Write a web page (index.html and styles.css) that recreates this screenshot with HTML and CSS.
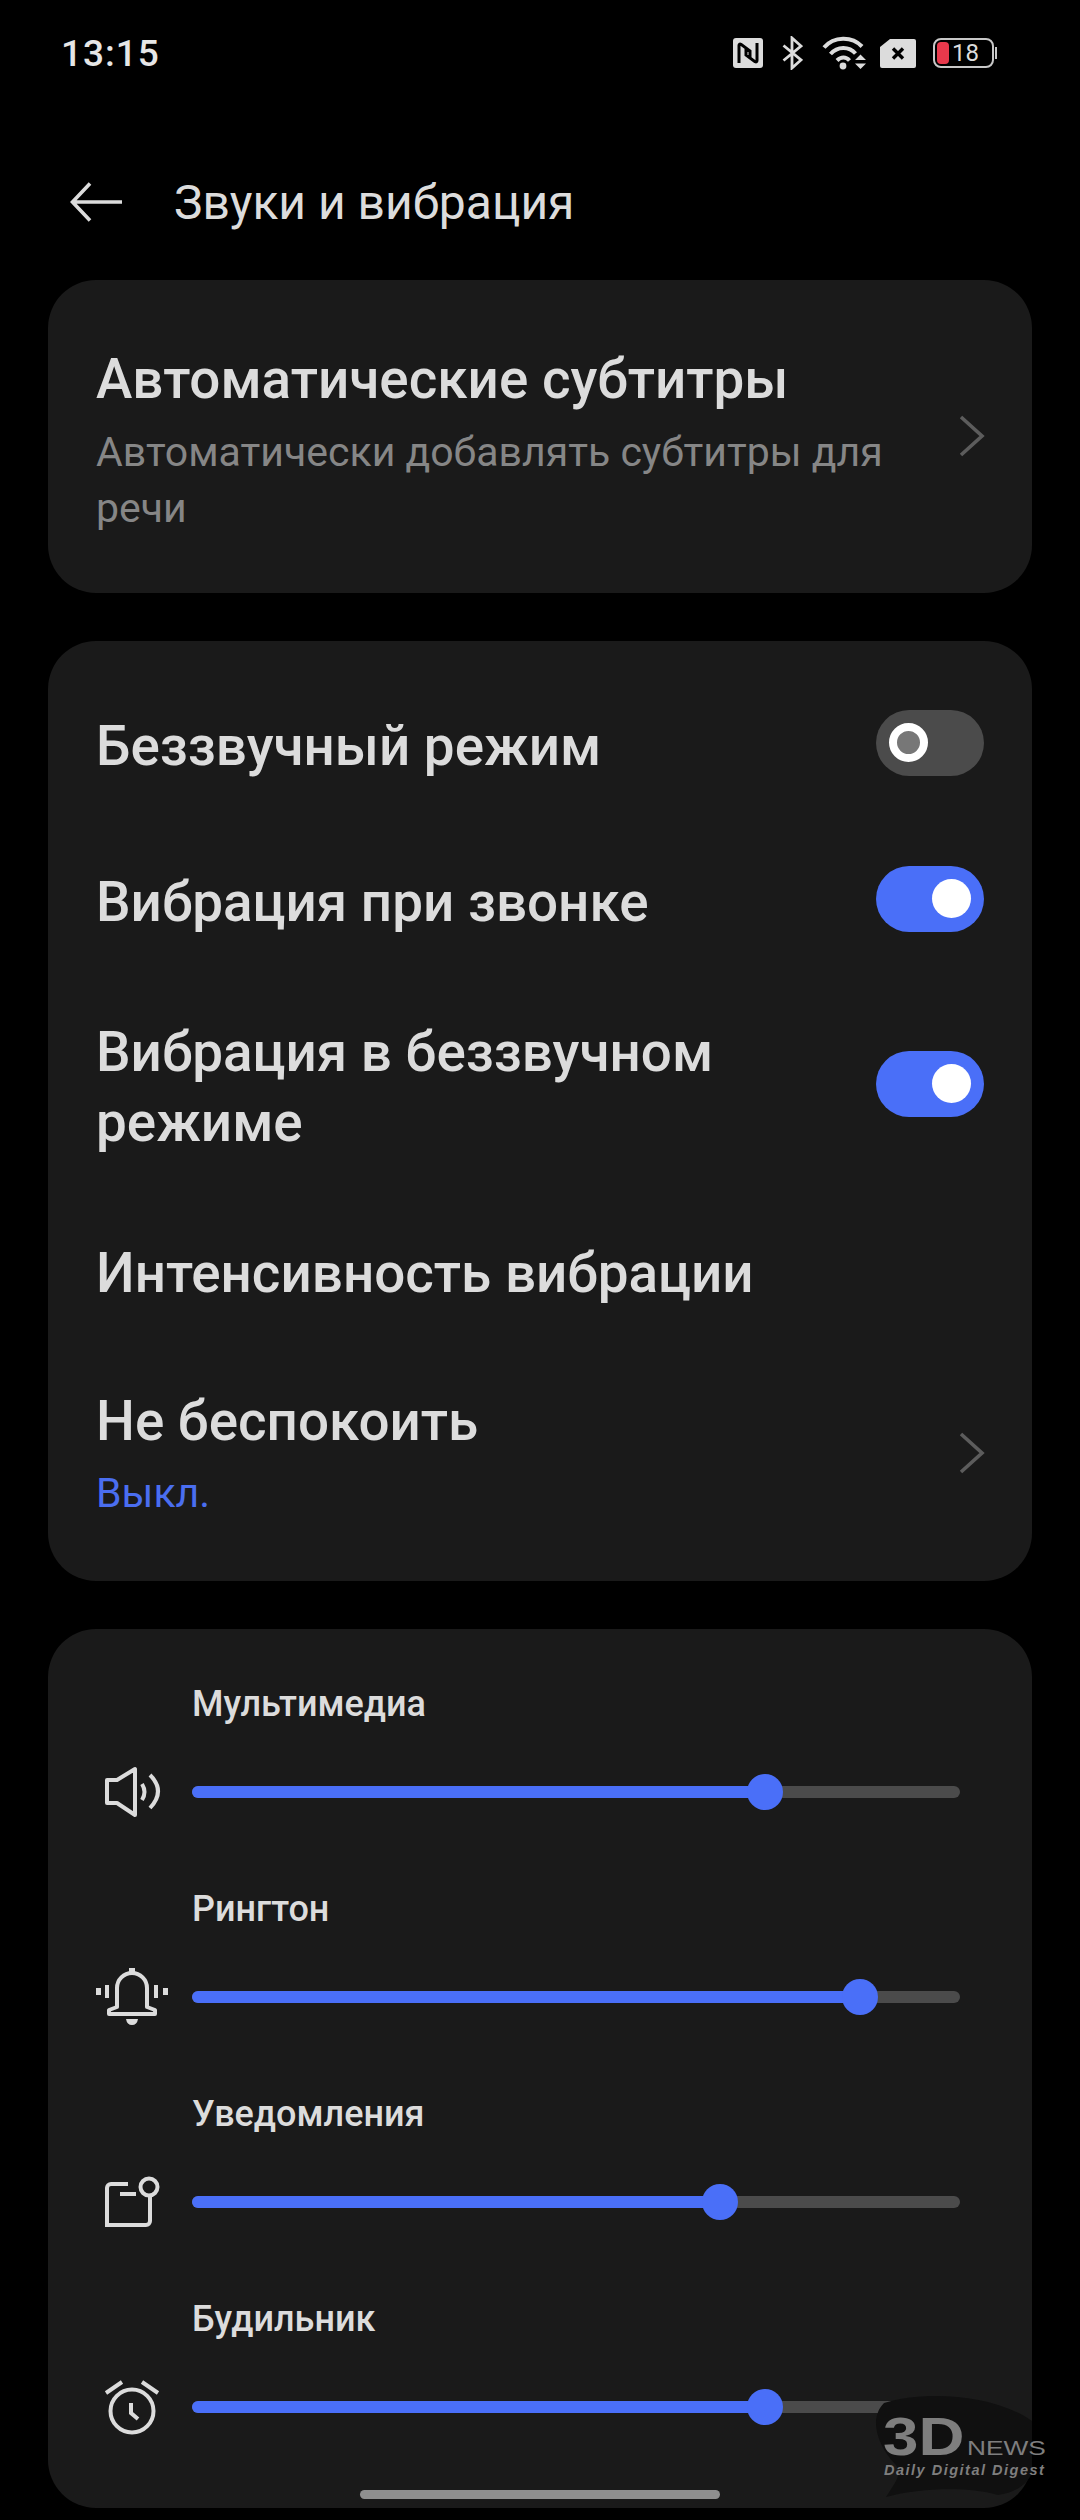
FILE: index.html
```html
<!DOCTYPE html>
<html lang="ru">
<head>
<meta charset="utf-8">
<title>Звуки и вибрация</title>
<link rel="stylesheet" href="styles.css">
</head>
<body>
<div class="screen">
  <div class="status">
    <span class="time">13:15</span>
    <div class="status-icons">
      <svg class="ic-nfc" width="30" height="30" viewBox="0 0 30 30"><rect width="30" height="30" rx="3" fill="#dcdcdc"/><path d="M6 25V7.5q0-2 2-1.2L17 13v6M24 5v17.5q0 2-2 1.2L13 17v-6" fill="none" stroke="#000" stroke-width="3"/></svg>
      <svg class="ic-bt" width="21" height="34" viewBox="0 0 21 34"><path d="M1.5 9.5 19 24 10 32V2l9 8L1.5 24.500" fill="none" stroke="#dcdcdc" stroke-width="2.800"/></svg>
      <svg class="ic-wifi" width="45" height="34" viewBox="0 0 45 34"><path d="M2 11.500C12-0 30-0 40 10.500M8.500 18C15.500 10 27 10 33.500 17.500M15 24.500c4-4 9-4 12.500 0" fill="none" stroke="#dcdcdc" stroke-width="4"/><circle cx="21" cy="30" r="3.400" fill="#dcdcdc"/><path d="M33 24h11l-5.500-5.500zM33 27.500h11l-5.500 5.500z" fill="#dcdcdc"/></svg>
      <svg class="ic-sim" width="36" height="29" viewBox="0 0 36 29"><path d="M10 0h24a2 2 0 0 1 2 2v25a2 2 0 0 1-2 2H2a2 2 0 0 1-2-2V8z" fill="#dcdcdc"/><path d="M13 9.500l10 10M23 9.500l-10 10" stroke="#000" stroke-width="3.400"/></svg>
      <div class="battery">
        <div class="battery-body"><span class="battery-level"></span><span class="battery-num">18</span></div>
        <span class="battery-tip"></span>
      </div>
    </div>
  </div>

  <header class="topbar">
    <svg class="back" width="52" height="40" viewBox="0 0 52 40"><path d="M52 20H3M20 1.500 2.500 20 20 38.500" fill="none" stroke="#dcdcdc" stroke-width="3.600"/></svg>
    <h1 class="page-title">Звуки и вибрация</h1>
  </header>

  <section class="card card-caption">
    <div class="row-text">
      <div class="row-title">Автоматические субтитры</div>
      <div class="row-sub">Автоматически добавлять субтитры для речи</div>
    </div>
    <svg class="chevron" width="26" height="42" viewBox="0 0 26 42"><path d="M2 2l21 19L2 40" fill="none" stroke="#5c5c5c" stroke-width="3.600"/></svg>
  </section>

  <section class="card card-modes">
    <div class="row row-a"><div class="row-title">Беззвучный режим</div><span class="toggle"><span class="knob knob-off"></span></span></div>
    <div class="row row-a"><div class="row-title">Вибрация при звонке</div><span class="toggle on"><span class="knob"></span></span></div>
    <div class="row row-b"><div class="row-title row-wrap">Вибрация в беззвучном режиме</div><span class="toggle on"><span class="knob"></span></span></div>
    <div class="row row-c"><div class="row-title">Интенсивность вибрации</div></div>
    <div class="row row-d">
      <div class="row-text">
        <div class="row-title">Не беспокоить</div>
        <div class="row-status">Выкл.</div>
      </div>
      <svg class="chevron" width="26" height="42" viewBox="0 0 26 42"><path d="M2 2l21 19L2 40" fill="none" stroke="#5c5c5c" stroke-width="3.600"/></svg>
    </div>
  </section>

  <section class="card card-volume">
    <div class="volume">
      <div class="volume-label">Мультимедиа</div>
      <div class="volume-line">
        <svg class="vol-icon" width="72" height="54" viewBox="0 0 72 54"><g fill="none" stroke="#dcdcdc" stroke-width="4" stroke-linejoin="round"><path d="M11 15h10L39 4v46L21 38H11z"/><path d="M46 19q5 8 0 16M54 10q16 16 0 33"/></g></svg>
        <div class="track"><span class="fill" style="width:74.6%"></span></div>
      </div>
    </div>
    <div class="volume">
      <div class="volume-label">Рингтон</div>
      <div class="volume-line">
        <svg class="vol-icon" width="72" height="60" viewBox="0 0 72 60"><g fill="none" stroke="#dcdcdc" stroke-width="4" stroke-linejoin="round"><path d="M13 47v-4l8-3V21a15 15 0 0 1 30 0v19l8 3v4z"/><path d="M11 18v13M60 18v13"/></g><path d="M0 21h5v7H0zM67 21h5v7h-5zM30 52h12q-1 6-6 6t-6-6zM33 1h6v5h-6z" fill="#dcdcdc"/></svg>
        <div class="track"><span class="fill" style="width:87%"></span></div>
      </div>
    </div>
    <div class="volume">
      <div class="volume-label">Уведомления</div>
      <div class="volume-line">
        <svg class="vol-icon" width="72" height="54" viewBox="0 0 72 54"><g fill="none" stroke="#dcdcdc" stroke-width="4"><path d="M32 9H15a4 4 0 0 0-4 4v37h39a4 4 0 0 0 4-4V22"/><circle cx="53" cy="12" r="8.500"/></g><path d="M24 17h16v4H24z" fill="#dcdcdc"/></svg>
        <div class="track"><span class="fill" style="width:68.7%"></span></div>
      </div>
    </div>
    <div class="volume">
      <div class="volume-label">Будильник</div>
      <div class="volume-line">
        <svg class="vol-icon" width="72" height="58" viewBox="0 0 72 58"><g fill="none" stroke="#dcdcdc" stroke-width="4"><circle cx="36" cy="33" r="21.500"/><path d="M10 15 26 4M62 15 46 4"/><path d="M35 25v10l7 6"/></g></svg>
        <div class="track"><span class="fill" style="width:74.6%"></span></div>
      </div>
    </div>
  </section>

  <div class="watermark">
    <svg class="wm-brush" width="160" height="104" viewBox="0 0 160 104"><path d="M12 8C50-4 120-2 160 26V78c-6 14-20 20-34 22C100 92 50 92 14 102 24 86 30 80 24 70 6 52-4 24 12 8z" fill="#101010"/></svg>
    <span class="wm-3d">3D</span><span class="wm-news">NEWS</span>
    <span class="wm-tag">Daily Digital Digest</span>
  </div>

  <div class="home-bar"></div>
</div>
</body>
</html>
```
FILE: styles.css
```css
* { box-sizing: border-box; }

html, body {
  margin: 0;
  background: #000;
}

.screen {
  position: relative;
  width: 1080px;
  height: 2520px;
  overflow: hidden;
  background: #000;
  color: #dcdcdc;
  font-family: Roboto, "Noto Sans", sans-serif;
}

/* Status bar */
.status {
  height: 106px;
  padding: 0 83px 0 61px;
  display: flex;
  align-items: center;
  justify-content: space-between;
}

.time {
  font-size: 37px;
  font-weight: 500;
  letter-spacing: 1px;
  color: #e6e6e6;
}

.status-icons {
  display: flex;
  align-items: center;
}

.ic-nfc { margin-right: 19px; }
.ic-bt { margin-right: 19px; }
.ic-wifi { margin-right: 13px; }
.ic-sim { margin-right: 17px; }

.battery {
  display: flex;
  align-items: center;
  gap: 1px;
}

.battery-body {
  width: 61px;
  height: 30px;
  border: 2px solid #c8c8c8;
  border-radius: 8px;
  display: flex;
  align-items: center;
  padding-left: 2px;
  gap: 3px;
}

.battery-level {
  width: 12px;
  height: 22px;
  border-radius: 4px;
  background: #e8394c;
}

.battery-num {
  font-size: 24px;
  line-height: 26px;
  color: #dcdcdc;
}

.battery-tip {
  width: 2px;
  height: 12px;
  background: #c8c8c8;
}

/* Page header */
.topbar {
  height: 174px;
  padding: 18px 0 0 70px;
  display: flex;
  align-items: center;
}

.page-title {
  margin: 0 0 0 52px;
  font-size: 48px;
  font-weight: 400;
  color: #dcdcdc;
}

/* Cards */
.card {
  margin: 0 48px 48px;
  width: 984px;
  background: #1a1a1a;
  border-radius: 48px;
}

.card-caption {
  height: 313px;
  padding: 64px 47px 0 48px;
  display: flex;
  justify-content: space-between;
  align-items: flex-start;
}

.card-caption .chevron { margin-top: 71px; }

.row-text { flex: 1; }

.row-title {
  font-size: 54.8px;
  line-height: 70px;
  font-weight: 500;
  color: #dcdcdc;
}

.row-sub {
  width: 800px;
  margin-top: 10px;
  font-size: 41px;
  line-height: 56px;
  color: #868686;
}

.row-status {
  margin-top: 9px;
  font-size: 41px;
  line-height: 56px;
  color: #4a6ef0;
}

.card-modes {
  height: 940px;
  padding-top: 27px;
}

.row {
  padding: 0 48px;
  display: flex;
  align-items: center;
  justify-content: space-between;
}

.row-a { height: 156px; }
.row-b { height: 206px; padding-top: 7px; }
.row-c { height: 174px; }
.row-d { height: 220px; padding: 0 47px 34px 48px; }

.row-wrap { width: 700px; }

.toggle {
  flex: none;
  width: 108px;
  height: 66px;
  margin-bottom: 6px;
  padding: 13px;
  border-radius: 33px;
  background: #4b4b4b;
  display: flex;
}

.toggle.on {
  background: #4a6ff8;
  justify-content: flex-end;
}

.knob {
  width: 39px;
  height: 39px;
  border-radius: 50%;
  background: #fff;
}

.knob-off {
  border: 8px solid #fff;
  background: #777;
}

/* Volume sliders */
.card-volume {
  height: 879px;
  margin-bottom: 0;
  padding-top: 46px;
}

.volume { height: 205px; }

.volume-label {
  margin-left: 144px;
  font-size: 36px;
  line-height: 58px;
  font-weight: 500;
  color: #dcdcdc;
}

.volume-line {
  height: 84px;
  margin-top: 17px;
  padding: 0 72px 0 48px;
  display: flex;
  align-items: center;
}

.vol-icon {
  flex: none;
  margin-right: 24px;
}

.track {
  flex: 1;
  height: 12px;
  border-radius: 6px;
  background: #4b4b4b;
}

.fill {
  position: relative;
  display: block;
  height: 12px;
  border-radius: 6px;
  background: #4a6ff8;
}

.fill::after {
  content: "";
  position: absolute;
  right: -18px;
  top: -12px;
  width: 36px;
  height: 36px;
  border-radius: 50%;
  background: #4a6ff8;
}

/* Watermark laid over the bottom-right corner */
.watermark {
  position: absolute;
  left: 872px;
  top: 2395px;
  width: 208px;
  height: 104px;
  color: #7e7e7e;
  font-family: "Liberation Sans", sans-serif;
}

.wm-brush {
  position: absolute;
  left: 0;
  top: 0;
}

.wm-3d {
  position: absolute;
  left: 11px;
  top: 14px;
  font-size: 54px;
  line-height: 54px;
  font-weight: 700;
  transform: scaleX(1.18);
  transform-origin: left;
}

.wm-news {
  position: absolute;
  left: 95px;
  top: 41px;
  font-size: 21px;
  line-height: 24px;
  transform: scaleX(1.25);
  transform-origin: left;
}

.wm-tag {
  position: absolute;
  left: 12px;
  top: 66px;
  font-size: 14.500px;
  line-height: 18px;
  font-weight: 700;
  font-style: italic;
  white-space: nowrap;
  letter-spacing: 1.5px;
}

.home-bar {
  position: absolute;
  left: 360px;
  top: 2490px;
  width: 360px;
  height: 9px;
  border-radius: 5px;
  background: #8f8f8f;
}
```
